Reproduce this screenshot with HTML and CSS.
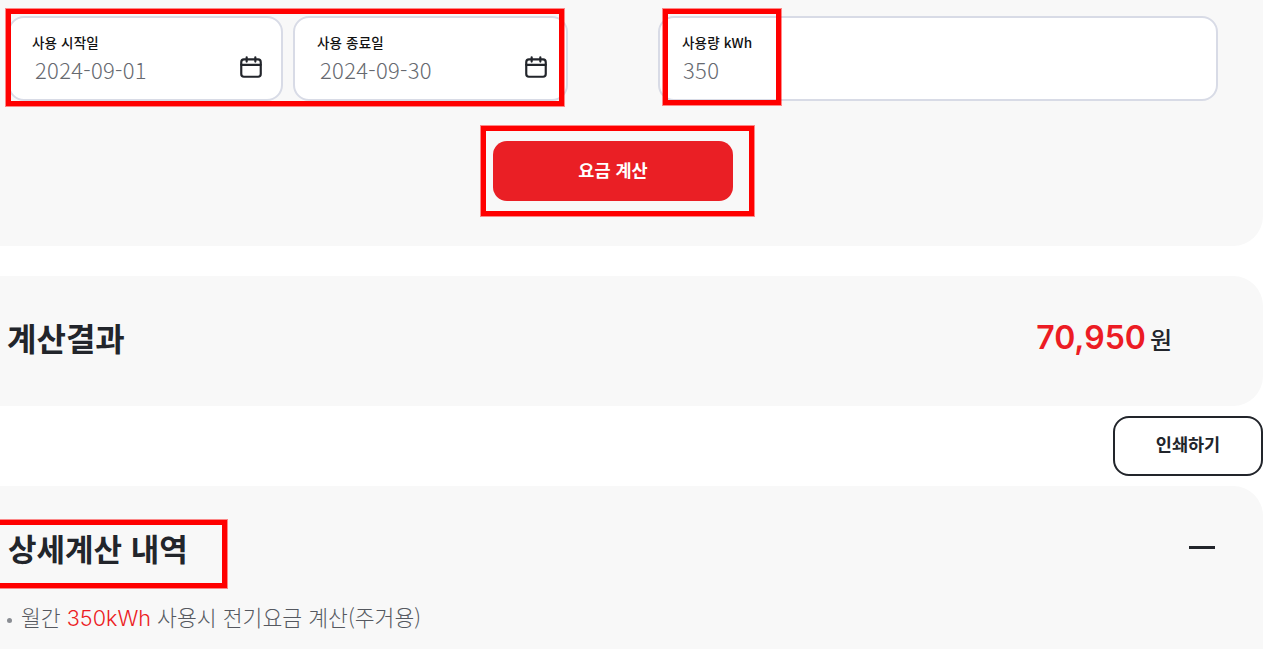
FILE: index.html
```html
<!DOCTYPE html>
<html lang="ko">
  <head>
    <meta charset="UTF-8" />
    <meta name="viewport" content="width=device-width, initial-scale=1.0" />
    <link rel="stylesheet" href="styles.css">
    <title>전기요금 계산</title>
  </head>
  <body>
    <div class="page">
      <section class="panel form-panel">
        <div class="fields">
          <div class="field date-field">
            <label>사용 시작일</label>
            <div class="value">2024-09-01</div>
            <svg class="cal" viewBox="0 0 24 24" width="26" height="26" fill="none" stroke="#22252b" stroke-width="2" stroke-linejoin="round" stroke-linecap="round">
              <rect x="3" y="5" width="18" height="16" rx="2.5" />
              <path d="M3 10h18M8 3v4M16 3v4" />
            </svg>
          </div>
          <div class="field date-field">
            <label>사용 종료일</label>
            <div class="value">2024-09-30</div>
            <svg class="cal" viewBox="0 0 24 24" width="26" height="26" fill="none" stroke="#22252b" stroke-width="2" stroke-linejoin="round" stroke-linecap="round">
              <rect x="3" y="5" width="18" height="16" rx="2.5" />
              <path d="M3 10h18M8 3v4M16 3v4" />
            </svg>
          </div>
          <div class="field usage-field">
            <label>사용량 kWh</label>
            <div class="value">350</div>
          </div>
        </div>
        <button class="calc-btn">요금 계산</button>
      </section>

      <section class="panel result-panel">
        <h2 class="result-title">계산결과</h2>
        <div class="result-amount"><strong>70,950</strong> 원</div>
      </section>

      <div class="print-row">
        <button class="print-btn">인쇄하기</button>
      </div>

      <section class="panel detail-panel">
        <div class="detail-head">
          <h2 class="detail-title">상세계산 내역</h2>
          <span class="collapse"></span>
        </div>
        <p class="detail-note"><span class="dot"></span>월간 <em>350kWh</em> 사용시 전기요금 계산(주거용)</p>
      </section>
    </div>

    <div class="mark mark-dates"></div>
    <div class="mark mark-usage"></div>
    <div class="mark mark-btn"></div>
    <div class="mark mark-title"></div>
  </body>
</html>
```

FILE: styles.css
```css
*,
*::after,
*::before {
  box-sizing: border-box;
  font-family: "Noto Sans CJK KR", "Noto Sans", sans-serif;
}

html,
body {
  margin: 0;
  height: 649px;
  overflow: hidden;
  background: #fff;
}

.page {
  width: 1263px;
}

.panel {
  background: #f8f8f8;
  border-radius: 0 30px 30px 0;
}

.form-panel {
  height: 246px;
  padding-top: 16px;
  border-radius: 0 0 30px 0;
}

.fields {
  display: flex;
  padding-left: 8px;
}

.field {
  position: relative;
  height: 85px;
  background: #fff;
  border: 2px solid #d8dbe6;
  border-radius: 16px;
  padding: 14px 0 0 22px;
}

.date-field {
  width: 275px;
  margin-right: 10px;
}

.date-field + .date-field {
  margin-right: 90px;
}

.usage-field {
  width: 560px;
}

.field label {
  display: block;
  font-size: 13.5px;
  line-height: 20px;
  letter-spacing: 0.15px;
  font-weight: 500;
  color: #111;
}

.value {
  margin: 3px 0 0 3px;
  font-size: 22px;
  line-height: 28px;
  letter-spacing: 0.3px;
  color: #66696f;
  font-weight: 300;
}

.usage-field .value {
  margin-left: 1px;
}

.cal {
  position: absolute;
  right: 17px;
  top: 36px;
}

.calc-btn {
  display: block;
  width: 240px;
  height: 60px;
  margin: 40px 0 0 493px;
  padding: 0 0 4px;
  border: 0;
  border-radius: 14px;
  background: #ea1f25;
  color: #fff;
  font-size: 17.5px;
  font-weight: 700;
}

.result-panel {
  height: 130px;
  margin-top: 30px;
  display: flex;
  align-items: center;
  justify-content: space-between;
  padding: 0 91px 8px 7px;
}

.result-title {
  margin: 0;
  font-size: 32px;
  font-weight: 700;
  color: #22252b;
}

.result-amount {
  display: flex;
  align-items: baseline;
  gap: 4px;
  font-size: 24px;
  font-weight: 500;
  color: #22252b;
}

.result-amount strong {
  font-size: 32px;
  font-weight: 600;
  color: #ec1c24;
  font-family: Inter, "Noto Sans", sans-serif;
}

.print-row {
  display: flex;
  justify-content: flex-end;
  padding-top: 10px;
}

.print-btn {
  width: 150px;
  height: 60px;
  padding: 0 0 5px;
  background: #fff;
  border: 2px solid #22252b;
  border-radius: 16px;
  font-size: 17.5px;
  font-weight: 700;
  color: #22252b;
}

.detail-panel {
  margin-top: 10px;
  height: 163px;
  padding: 39px 48px 0 8px;
  border-radius: 0 30px 0 0;
}

.detail-head {
  display: flex;
  justify-content: space-between;
  align-items: center;
}

.detail-title {
  margin: 0;
  font-size: 31px;
  line-height: 46px;
  font-weight: 700;
  color: #22252b;
}

.collapse {
  width: 26px;
  height: 3px;
  margin-top: -2px;
  background: #22252b;
}

.detail-note {
  margin: 32px 0 0 -1px;
  font-size: 21.6px;
  line-height: 28px;
  font-weight: 300;
  color: #55585f;
}

.detail-note em {
  font-style: normal;
  color: #ec1c24;
  font-family: Inter, sans-serif;
}

.dot {
  display: inline-block;
  width: 5px;
  height: 5px;
  margin-right: 9px;
  border-radius: 50%;
  background: #8a8d93;
  vertical-align: middle;
}

.mark {
  position: absolute;
  border: 5px solid #ff0000;
  box-shadow: 0 0 0 1px rgba(255, 0, 0, 0.45);
}

.mark-dates {
  left: 6px;
  top: 9px;
  width: 558px;
  height: 97px;
}

.mark-usage {
  left: 663px;
  top: 9px;
  width: 118px;
  height: 96px;
}

.mark-btn {
  left: 481px;
  top: 126px;
  width: 273px;
  height: 90px;
}

.mark-title {
  left: -5px;
  top: 520px;
  width: 232px;
  height: 68px;
}
```
